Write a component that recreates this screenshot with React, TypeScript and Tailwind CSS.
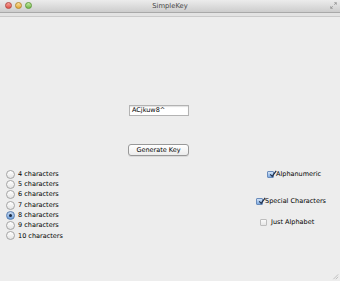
import React, { useState } from "react";

const lengths = [4, 5, 6, 7, 8, 9, 10];

function Radio({ checked }: { checked: boolean }) {
  return (
    <span
      className={`flex h-[9px] w-[9px] shrink-0 items-center justify-center rounded-full border ${
        checked
          ? "border-[#5a7fb0] bg-gradient-to-b from-[#c9dcf3] to-[#6fa0dc]"
          : "border-[#a4a4a4] bg-gradient-to-b from-[#ffffff] to-[#e4e4e4]"
      }`}
    >
      {checked && <span className="h-[3px] w-[3px] rounded-full bg-[#1b2a44]" />}
    </span>
  );
}

function Check({ checked }: { checked: boolean }) {
  return (
    <span
      className={`relative flex h-[7px] w-[7px] shrink-0 items-center justify-center rounded-[1px] border ${
        checked
          ? "border-[#6a8cbc] bg-gradient-to-b from-[#d3e3f6] to-[#7eaae0]"
          : "border-[#bdbdbd] bg-gradient-to-b from-[#fafafa] to-[#e6e6e6]"
      }`}
    >
      {checked && (
        <svg viewBox="0 0 10 10" className="absolute -top-[1.5px] left-[0.5px] h-[8px] w-[8px]">
          <path d="M1.5 5.5 L4 8 L9 1" fill="none" stroke="#1e2d48" strokeWidth="1.5" />
        </svg>
      )}
    </span>
  );
}

export default function App() {
  const [length, setLength] = useState(8);
  const [opts, setOpts] = useState({ alnum: true, special: true, alpha: false });

  return (
    <div
      className="flex h-[281px] w-[340px] flex-col overflow-hidden bg-[#ededed] text-black"
      style={{ fontFamily: '"DejaVu Sans", Verdana, sans-serif' }}
    >
      {/* title bar */}
      <div className="relative flex h-[13px] shrink-0 items-center justify-center border-b border-[#a9a9a9] bg-gradient-to-b from-[#ececec] to-[#cdcdcd]">
        <div className="absolute left-[5px] top-[2px] flex gap-[3px]">
          <span className="h-[7px] w-[7px] rounded-full border border-[#b44a44] bg-gradient-to-b from-[#f7a29c] to-[#e0524a]" />
          <span className="h-[7px] w-[7px] rounded-full border border-[#b78a2e] bg-gradient-to-b from-[#fbe09a] to-[#e3aa35]" />
          <span className="h-[7px] w-[7px] rounded-full border border-[#5f9a3a] bg-gradient-to-b from-[#c6eca4] to-[#72b84a]" />
        </div>
        <span className="text-[6.8px] leading-none text-[#444]">SimpleKey</span>
        <svg viewBox="0 0 10 10" className="absolute right-[3px] top-[2px] h-[7px] w-[7px]">
          <path d="M6 1 H9 V4 M9 1 L6 4 M4 9 H1 V6 M1 9 L4 6" fill="none" stroke="#8a8a8a" strokeWidth="1" />
        </svg>
      </div>
      <div className="h-[4px] shrink-0 border-b border-[#cacaca] bg-[#e3e3e3]" />

      {/* content */}
      <div className="flex flex-1 flex-col">
        <div className="ml-[129px] mt-[88px] flex h-[11px] w-[60px] items-center border border-[#b3b3b3] bg-white px-[2px] text-[6.5px] shadow-[inset_0_1px_1px_rgba(0,0,0,0.12)]">
          ACjkuw8^
        </div>

        <button className="ml-[128px] mt-[28px] flex h-[12px] w-[61px] items-center justify-center rounded-[3px] border border-[#989898] bg-gradient-to-b from-[#ffffff] to-[#ececec] text-[6.5px] leading-none shadow-[0_1px_0_rgba(0,0,0,0.08)]">
          Generate Key
        </button>

        <div className="mt-[13px] flex justify-between">
          <div className="ml-[6px] flex flex-col">
            {lengths.map((n) => (
              <label
                key={n}
                onClick={() => setLength(n)}
                className="flex h-[10.3px] items-center gap-[3px] text-[6.5px] leading-none"
              >
                <Radio checked={length === n} />
                {n} characters
              </label>
            ))}
          </div>

          <div className="mr-[14px] flex w-[70px] flex-col items-start pt-[1px] text-[6.5px] leading-none">
            <label
              onClick={() => setOpts({ ...opts, alnum: !opts.alnum })}
              className="ml-[11px] flex h-[8px] items-center gap-[2px]"
            >
              <Check checked={opts.alnum} />
              Alphanumeric
            </label>
            <label
              onClick={() => setOpts({ ...opts, special: !opts.special })}
              className="mt-[19px] flex h-[8px] items-center gap-[2px]"
            >
              <Check checked={opts.special} />
              Special Characters
            </label>
            <label
              onClick={() => setOpts({ ...opts, alpha: !opts.alpha })}
              className="ml-[4px] mt-[13px] flex h-[8px] items-center gap-[4px]"
            >
              <Check checked={opts.alpha} />
              Just Alphabet
            </label>
          </div>
        </div>

        <div className="mt-auto flex justify-end pb-[1px] pr-[1px]">
          <svg viewBox="0 0 10 10" className="h-[8px] w-[8px]">
            <path d="M9 3 L3 9 M9 6 L6 9" stroke="#b5b5b5" strokeWidth="1" />
          </svg>
        </div>
      </div>
    </div>
  );
}
